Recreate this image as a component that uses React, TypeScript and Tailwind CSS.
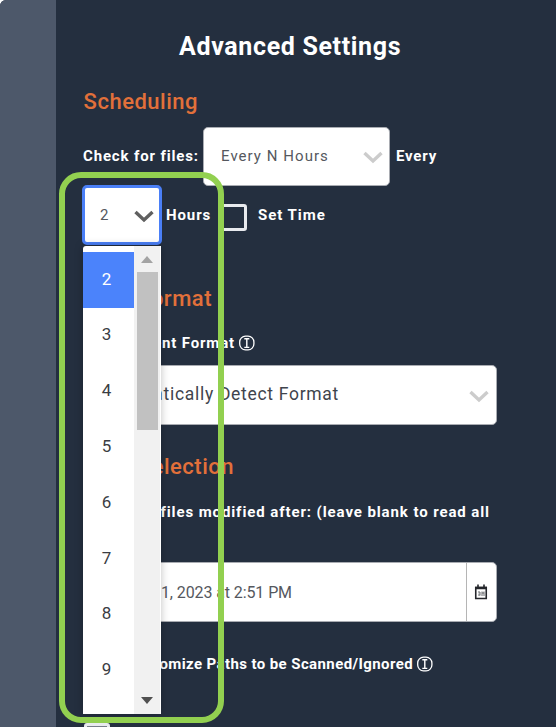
import type { ReactNode } from "react";

const hours = [2, 3, 4, 5, 6, 7, 8, 9];

function Chevron({ className }: { className: string }) {
  return (
    <svg viewBox="0 0 20 13" className={`w-5 h-[13px] mt-0.5 shrink-0 ${className}`} fill="none" stroke="currentColor" strokeWidth="3.4">
      <path d="M1.5 2 L10 10 L18.5 2" />
    </svg>
  );
}

function InfoIcon() {
  return (
    <svg viewBox="0 0 16 16" className="w-4 h-4 shrink-0" fill="none" stroke="white">
      <rect x="0.7" y="1.2" width="14.2" height="13.6" rx="5.8" strokeWidth="1.3" />
      <path d="M7.8 3v10M5.3 3.7h5M5.3 12.4h5" strokeWidth="1.4" />
    </svg>
  );
}

function CalendarIcon() {
  return (
    <svg viewBox="0 0 14 16" className="w-3.5 h-4 mr-0.5" fill="none" stroke="#24262b">
      <path d="M1.75 3.5h10.5v11H1.75z" strokeWidth="1.6" />
      <path d="M1 4h12" strokeWidth="2.6" />
      <path d="M4 0.5v3M10 0.5v3" strokeWidth="1.6" />
      <path d="M4 8h2v3.5M5 9.5v2.5M8 7.5v4.5M8 9h2M10 7.5v4.5" strokeWidth="1" stroke="#66686d" />
    </svg>
  );
}

function Heading({ children, className }: { children: ReactNode; className: string }) {
  return (
    <h2 className={`h-8 leading-8 flex justify-end whitespace-nowrap text-[22px] font-medium text-[#e2703a] ${className}`}>
      {children}
    </h2>
  );
}

export default function App() {
  return (
    <div className="w-[556px] h-[727px] bg-white overflow-hidden font-['Roboto',sans-serif]">
      <div className="relative flex h-full bg-[#242f3f] rounded-tl-[6px] overflow-hidden">
        <aside className="w-14 shrink-0 bg-[#4d586a]" />

        <main className="flex-1 pl-[27px] text-[15px] font-bold text-white">
          <h1 className="mt-[31px] h-8 leading-8 ml-24 text-[25px] font-bold tracking-[0.65px] whitespace-nowrap">
            Advanced Settings
          </h1>

          <Heading className="mt-[23px] w-[115px] tracking-[0.5px]">Scheduling</Heading>
          <div className="mt-2 flex items-center h-[60px]">
            <span className="w-[120px] tracking-[0.85px] whitespace-nowrap">Check for files:</span>
            <div className="w-[187px] h-[59px] flex items-center justify-between pl-[17px] pr-[6px] rounded-[5px] border border-[#a9acb2] bg-white">
              <span className="font-normal text-[#55585e] tracking-[1.05px]">Every N Hours</span>
              <Chevron className="text-[#cccccc]" />
            </div>
            <span className="ml-[6px] tracking-[0.8px]">Every</span>
          </div>

          <div className="-mt-px flex items-center h-[60px]">
            <div className="-ml-px w-20 h-[60px] flex items-center justify-between pl-[15px] pr-[5px] rounded-[5px] border-[3px] border-[#4a7ff7] bg-white">
              <span className="font-normal text-[#55585e]">2</span>
              <Chevron className="text-[#606060]" />
            </div>
            <span className="ml-1 w-[55px] tracking-[0.9px]">Hours</span>
            <div className="w-[26px] h-[27px] mt-[4px] rounded-[3px] border-[3px] border-[#e8eaee]" />
            <span className="ml-[11px] tracking-[0.95px]">Set Time</span>
          </div>

          <Heading className="mt-[38px] w-[129px] tracking-[0.5px]">Data Format</Heading>
          <div className="mt-4 h-6 flex items-center gap-1">
            <span className="w-[152px] flex justify-end whitespace-nowrap tracking-[0.85px]">File Content Format</span>
            <InfoIcon />
          </div>
          <div className="mt-[10px] w-[414px] h-[60px] flex items-center justify-between pr-[7px] rounded-[5px] border border-[#a9acb2] bg-white">
            <span className="w-[255px] pb-0.5 flex justify-end whitespace-nowrap text-[17.5px] font-normal text-[#3f444d] tracking-[0.7px]">
              Automatically Detect Format
            </span>
            <Chevron className="text-[#cccccc]" />
          </div>

          <Heading className="mt-[26px] w-[151px] tracking-[0.5px]">Data Selection</Heading>
          <div className="mt-[17px] h-6 w-[407px] flex justify-end items-center whitespace-nowrap tracking-[0.9px]">
            Only read files modified after: (leave blank to read all
          </div>
          <div className="mt-[38px] w-[414px] h-[60px] flex rounded-[5px] border border-[#a9acb2] bg-white overflow-hidden">
            <div className="w-[383px] border-r border-[#b5b5b5] flex items-center">
              <span className="w-[208px] pt-px flex justify-end whitespace-nowrap text-[16px] font-normal text-[#55585e] tracking-[-0.1px]">
                August 1, 2023 at 2:51 PM
              </span>
            </div>
            <div className="flex-1 flex items-center justify-center">
              <CalendarIcon />
            </div>
          </div>
          <div className="mt-[30px] h-6 flex items-center gap-1">
            <span className="w-[330px] flex justify-end whitespace-nowrap tracking-[0.4px]">Customize Paths to be Scanned/Ignored</span>
            <InfoIcon />
          </div>
          <div className="mt-[47px] ml-[1px] w-[26px] h-[27px] rounded-[3px] border-[3px] border-[#e8eaee] bg-[#777e89]" />
        </main>

        {/* open hours list */}
        <div className="absolute left-[83px] top-[246px] w-[78px] h-[468px] flex bg-white rounded-tl-[3px] shadow-[0_0_8px_rgba(0,0,0,0.25)]">
          <ul className="w-[51px] pt-[6px] text-[17px] text-[#3a3d43]">
            {hours.map((hour) => (
              <li
                key={hour}
                className={`h-[55.8px] pr-1 pb-px flex items-center justify-center ${hour === 2 ? "bg-[#4b83fb] text-white" : ""}`}
              >
                {hour}
              </li>
            ))}
          </ul>
          <div className="flex-1 flex flex-col items-center bg-[#f1f1f1] border-r border-white">
            <svg viewBox="0 0 12 7" className="mt-[10px] w-3 h-[7px]" fill="#a3a3a3">
              <path d="M0 7 6 0l6 7z" />
            </svg>
            <div className="mt-[9px] w-[21px] h-[158px] bg-[#c1c1c1]" />
            <svg viewBox="0 0 12 7" className="mt-auto mb-[10px] w-3 h-[7px]" fill="#505050">
              <path d="M0 0h12L6 7z" />
            </svg>
          </div>
        </div>

        {/* callout frame */}
        <div className="absolute left-[59px] top-[172px] w-[165px] h-[551px] rounded-[22px] border-[6px] border-[#92d050]" />
      </div>
    </div>
  );
}
